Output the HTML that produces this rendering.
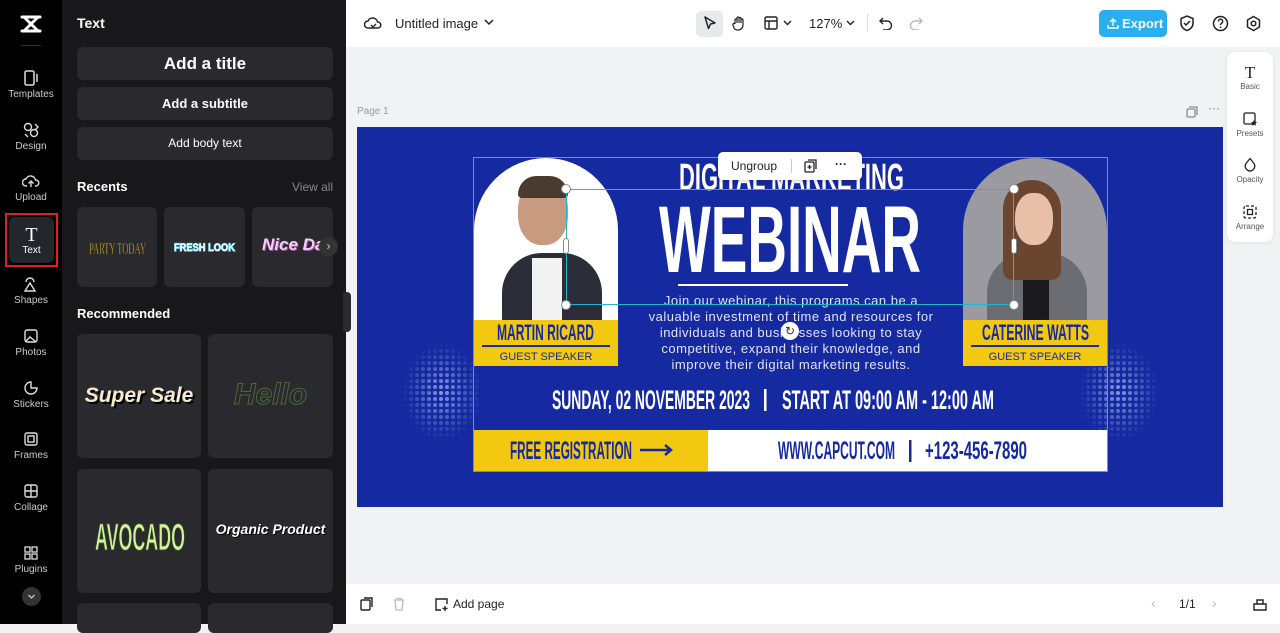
<!DOCTYPE html>
<html><head><meta charset="utf-8"><style>
*{box-sizing:border-box;margin:0;padding:0}
body{width:1280px;height:624px;overflow:hidden;font-family:"Liberation Sans",sans-serif;background:#f1f2f4;position:relative}
.abs{position:absolute}
.side{left:0;top:0;width:62px;height:624px;background:#000}
.nav{position:absolute;left:0;width:62px;text-align:center;color:#ccc;font-size:10px}
.nav svg{display:block;margin:0 auto 3px}
.panel{left:62px;top:0;width:284px;height:624px;background:#18181b;color:#fff}
.btn{position:absolute;left:15px;width:256px;height:33px;background:#2a2a2e;border-radius:6px;text-align:center;color:#fff;font-weight:bold}
.card{position:absolute;background:#2a2a2e;border-radius:6px;overflow:hidden}
</style></head><body>
<!-- sidebar -->
<div class="abs side">
  <svg class="abs" style="left:19px;top:13px" width="24" height="22" viewBox="0 0 24 22"><path d="M3 4h18M3 18h18M5 4l14 14M19 4L5 18" stroke="#fff" stroke-width="3" fill="none" stroke-linecap="round"/></svg>
  <div class="abs" style="left:21px;top:45px;width:20px;height:1px;background:#333"></div>
  <div class="nav" style="top:70px"><svg width="16" height="16"><rect x="2" y="1" width="9" height="14" rx="1.5" stroke="#ddd" fill="none" stroke-width="1.5"/><path d="M14 4v8" stroke="#ddd" stroke-width="1.5"/></svg>Templates</div>
  <div class="nav" style="top:122px"><svg width="16" height="16"><circle cx="5" cy="5" r="3.5" stroke="#ddd" fill="none" stroke-width="1.4"/><circle cx="11" cy="11" r="3.5" stroke="#ddd" fill="none" stroke-width="1.4"/><path d="M12 2l3 3-3 3M2 12l3 3" stroke="#ddd" fill="none" stroke-width="1.4"/></svg>Design</div>
  <div class="nav" style="top:173px"><svg width="18" height="16"><path d="M5 13H4a3.5 3.5 0 010-7 5 5 0 019.5 1A3 3 0 0114 13h-1M9 14V8M6.5 10.5L9 8l2.5 2.5" stroke="#ddd" fill="none" stroke-width="1.4"/></svg>Upload</div>
  <div class="abs" style="left:5px;top:213px;width:53px;height:54px;border:2px solid #e02020;background:#000"><div style="position:absolute;left:2px;top:2px;right:2px;bottom:2px;background:#23272c;border-radius:6px;color:#fff;text-align:center;font-size:10px;padding-top:8px"><div style="font-family:'Liberation Serif',serif;font-size:20px;line-height:20px">T</div>Text</div></div>
  <div class="nav" style="top:276px"><svg width="16" height="16"><path d="M3 6a4 4 0 118 0M2 15l5-8 5 8z" stroke="#ddd" fill="none" stroke-width="1.4"/></svg>Shapes</div>
  <div class="nav" style="top:328px"><svg width="16" height="16"><rect x="2" y="2" width="12" height="12" rx="2" stroke="#ddd" fill="none" stroke-width="1.4"/><path d="M3 13l4-4 6 5" stroke="#ddd" fill="none" stroke-width="1.4"/></svg>Photos</div>
  <div class="nav" style="top:380px"><svg width="16" height="16"><path d="M8 2a6 6 0 106 6H8z" stroke="#ddd" fill="none" stroke-width="1.4"/></svg>Stickers</div>
  <div class="nav" style="top:431px"><svg width="16" height="16"><rect x="2" y="2" width="12" height="12" rx="2" stroke="#ddd" fill="none" stroke-width="1.4"/><rect x="5" y="5" width="6" height="6" stroke="#ddd" fill="none" stroke-width="1.4"/></svg>Frames</div>
  <div class="nav" style="top:483px"><svg width="16" height="16"><rect x="2" y="2" width="12" height="12" rx="2" stroke="#ddd" fill="none" stroke-width="1.4"/><path d="M8 2v12M2 8h12" stroke="#ddd" stroke-width="1.4"/></svg>Collage</div>
  <div class="nav" style="top:545px"><svg width="16" height="16"><rect x="2" y="2" width="5" height="5" stroke="#ddd" fill="none" stroke-width="1.3"/><rect x="9" y="2" width="5" height="5" stroke="#ddd" fill="none" stroke-width="1.3"/><rect x="2" y="9" width="5" height="5" stroke="#ddd" fill="none" stroke-width="1.3"/><rect x="9" y="9" width="5" height="5" stroke="#ddd" fill="none" stroke-width="1.3"/></svg>Plugins</div>
  <div class="abs" style="left:22px;top:587px;width:19px;height:19px;border-radius:50%;background:#333"><svg width="19" height="19"><path d="M6.5 8l3 3 3-3" stroke="#ccc" fill="none" stroke-width="1.3"/></svg></div>
</div>
<!-- panel -->
<div class="abs panel">
  <div class="abs" style="left:15px;top:15px;font-size:14px;font-weight:bold">Text</div>
  <div class="btn" style="top:47px;font-size:17px;line-height:33px">Add a title</div>
  <div class="btn" style="top:87px;font-size:13px;line-height:33px">Add a subtitle</div>
  <div class="btn" style="top:127px;font-size:12px;line-height:33px;font-weight:normal">Add body text</div>
  <div class="abs" style="left:15px;top:179px;font-size:13px;font-weight:bold">Recents</div>
  <div class="abs" style="left:230px;top:180px;font-size:12px;color:#888">View all</div>
  <div class="card" style="left:15px;top:207px;width:80px;height:80px"><svg width="80" height="80"><text x="12" y="47" textLength="57" lengthAdjust="spacingAndGlyphs" font-family="Liberation Serif" font-size="17" fill="#c8a93a" stroke="#3a3010" stroke-width=".4">PARTY TODAY</text></svg></div>
  <div class="card" style="left:102px;top:207px;width:81px;height:80px"><svg width="81" height="80"><text x="10" y="44" textLength="61" lengthAdjust="spacingAndGlyphs" font-family="Liberation Sans" font-weight="bold" font-size="11" fill="#fff" stroke="#4fd4ff" stroke-width="1.2" paint-order="stroke">FRESH LOOK</text></svg></div>
  <div class="card" style="left:190px;top:207px;width:81px;height:80px"><div style="margin-top:28px;padding-left:10px;color:#f0d0f0;font-size:17px;font-style:italic;font-weight:bold;text-shadow:1px 1px 0 #a050a0;white-space:nowrap">Nice Day</div></div>
  <div class="abs" style="left:257px;top:237px;width:19px;height:19px;border-radius:50%;background:#333;color:#ccc;font-size:12px;text-align:center;line-height:18px">›</div>
  <div class="abs" style="left:15px;top:306px;font-size:13px;font-weight:bold">Recommended</div>
  <div class="card" style="left:15px;top:334px;width:124px;height:124px"><div style="margin-top:50px;text-align:center;color:#f5ecd0;font-size:21px;font-style:italic;font-weight:bold;text-shadow:2px 2px 0 #000">Super Sale</div></div>
  <div class="card" style="left:146px;top:334px;width:125px;height:124px"><div style="margin-top:44px;text-align:center;color:#2a2a2e;font-size:30px;font-style:italic;font-weight:bold;-webkit-text-stroke:1px #4a6a3a">Hello</div></div>
  <div class="card" style="left:15px;top:469px;width:124px;height:124px"><svg width="124" height="124"><text x="18" y="81" textLength="90" lengthAdjust="spacingAndGlyphs" font-family="Liberation Sans" font-weight="bold" font-size="38" fill="#d8f0a0" stroke="#2a5a1a" stroke-width="1">AVOCADO</text></svg></div>
  <div class="card" style="left:146px;top:469px;width:125px;height:124px"><div style="margin-top:52px;text-align:center;color:#fff;font-size:14px;font-style:italic;font-weight:bold;text-shadow:1px 1px 0 #000">Organic Product</div></div>
  <div class="card" style="left:15px;top:603px;width:124px;height:30px"></div>
  <div class="card" style="left:146px;top:603px;width:125px;height:30px"></div>
</div>
<div class="abs" style="left:343px;top:292px;width:8px;height:40px;background:#2a2a2e;border-radius:0 4px 4px 0"></div>
<!-- top bar -->
<div class="abs" style="left:346px;top:0;width:934px;height:47px;background:#fff">
  <svg class="abs" style="left:18px;top:15px" width="18" height="16"><path d="M5 13H4a3.5 3.5 0 010-7 5 5 0 019.5 1A3 3 0 0114 13z" stroke="#222" fill="none" stroke-width="1.5"/><path d="M7 10l2 2 3-3" stroke="#222" fill="none" stroke-width="1.3"/></svg>
  <div class="abs" style="left:49px;top:16px;font-size:13px;color:#222">Untitled image</div>
  <svg class="abs" style="left:138px;top:18px" width="10" height="8"><path d="M1 2l4 4 4-4" stroke="#222" fill="none" stroke-width="1.5"/></svg>
  <div class="abs" style="left:350px;top:11px;width:27px;height:26px;background:#e8e9ec;border-radius:5px"><svg width="27" height="26"><path d="M9 6l10 6-4.5 1-2 4.5z" stroke="#222" fill="none" stroke-width="1.5" stroke-linejoin="round"/></svg></div>
  <svg class="abs" style="left:385px;top:15px" width="16" height="16"><path d="M4 9V5a1 1 0 012 0v3V3a1 1 0 012 0v5V3.5a1 1 0 012 0V8V5a1 1 0 012 0v5a5 5 0 01-5 5h-1a4 4 0 01-3-2L2 10a1 1 0 012-1z" stroke="#222" fill="none" stroke-width="1.2"/></svg>
  <svg class="abs" style="left:418px;top:16px" width="14" height="14"><rect x="1" y="1" width="12" height="12" rx="1.5" stroke="#222" fill="none" stroke-width="1.4"/><path d="M1 5h12M5 5v8" stroke="#222" stroke-width="1.4"/></svg>
  <svg class="abs" style="left:437px;top:20px" width="9" height="6"><path d="M1 1l3.5 3.5L8 1" stroke="#222" fill="none" stroke-width="1.4"/></svg>
  <div class="abs" style="left:463px;top:16px;font-size:13px;color:#222">127%</div>
  <svg class="abs" style="left:500px;top:20px" width="9" height="6"><path d="M1 1l3.5 3.5L8 1" stroke="#222" fill="none" stroke-width="1.4"/></svg>
  <div class="abs" style="left:521px;top:14px;width:1px;height:18px;background:#ddd"></div>
  <svg class="abs" style="left:533px;top:16px" width="14" height="14"><path d="M4 2L1 5l3 3M1 5h7a4.5 4.5 0 010 9H4" stroke="#222" fill="none" stroke-width="1.4"/></svg>
  <svg class="abs" style="left:563px;top:16px" width="14" height="14"><path d="M10 2l3 3-3 3M13 5H6a4.5 4.5 0 000 9h4" stroke="#bbb" fill="none" stroke-width="1.4"/></svg>
  <div class="abs" style="left:753px;top:10px;width:68px;height:27px;background:#29aef0;border-radius:5px;color:#fff;font-size:13px;font-weight:bold;line-height:27px;padding-left:23px">Export<svg style="position:absolute;left:8px;top:7px" width="12" height="12"><path d="M6 9V2M3 5l3-3 3 3M1 8v3h10V8" stroke="#fff" fill="none" stroke-width="1.4"/></svg></div>
  <svg class="abs" style="left:833px;top:15px" width="16" height="17"><path d="M8 1l6 2.5v5c0 3.5-3 6-6 7-3-1-6-3.5-6-7v-5z" stroke="#222" fill="none" stroke-width="1.5"/><path d="M5 8l2 2 4-4" stroke="#222" fill="none" stroke-width="1.5"/></svg>
  <svg class="abs" style="left:866px;top:15px" width="17" height="17"><circle cx="8.5" cy="8.5" r="7" stroke="#222" fill="none" stroke-width="1.5"/><path d="M6.3 6.5a2.2 2.2 0 114 1.2c-1 .8-1.8 1-1.8 2.3" stroke="#222" fill="none" stroke-width="1.4"/><circle cx="8.5" cy="12.3" r=".9" fill="#222"/></svg>
  <svg class="abs" style="left:899px;top:15px" width="17" height="17"><path d="M8.5 1.5l6 3.5v7l-6 3.5-6-3.5V5z" stroke="#222" fill="none" stroke-width="1.5"/><circle cx="8.5" cy="8.5" r="2.3" stroke="#222" fill="none" stroke-width="1.5"/></svg>
</div>
<!-- right panel -->
<div class="abs" style="left:1227px;top:52px;width:46px;height:190px;background:#fff;border-radius:8px;box-shadow:0 1px 4px rgba(0,0,0,.08);font-size:8px;color:#555;text-align:center">
  <div style="position:absolute;top:12px;width:46px"><div style="font-family:'Liberation Serif',serif;font-size:17px;color:#222;line-height:18px">T</div>Basic</div>
  <div style="position:absolute;top:59px;width:46px"><svg width="16" height="16"><rect x="2" y="2" width="11" height="11" rx="1.5" stroke="#222" fill="none" stroke-width="1.3"/><path d="M12 9l1 2 2 .3-1.5 1.4.4 2-1.9-1-1.9 1 .4-2L9 11.3l2-.3z" fill="#222"/></svg><br>Presets</div>
  <div style="position:absolute;top:105px;width:46px"><svg width="16" height="16"><path d="M8 1.5l4 5a4.8 4.8 0 11-8 0z" stroke="#222" fill="none" stroke-width="1.3"/></svg><br>Opacity</div>
  <div style="position:absolute;top:152px;width:46px"><svg width="16" height="16"><rect x="2" y="2" width="12" height="12" rx="2" stroke="#222" fill="none" stroke-width="1.3" stroke-dasharray="3 2"/><rect x="5.5" y="5.5" width="5" height="5" stroke="#222" fill="none" stroke-width="1.3"/></svg><br>Arrange</div>
</div>
<div class="abs" style="left:357px;top:106px;font-size:10px;color:#999">Page 1</div>
<svg class="abs" style="left:1186px;top:106px" width="12" height="12"><rect x="1" y="3" width="8" height="8" rx="1" stroke="#777" fill="none" stroke-width="1.1"/><path d="M3 1h8v8" stroke="#777" fill="none" stroke-width="1.1"/></svg>
<div class="abs" style="left:1208px;top:101px;font-size:12px;color:#777">···</div>
<!-- canvas -->
<div class="abs" style="left:357px;top:127px;width:866px;height:380px;background:#1529a1;overflow:hidden">
  <svg class="abs" style="left:45px;top:215px" width="80" height="100"><defs><pattern id="d" width="6" height="6" patternUnits="userSpaceOnUse"><circle cx="3" cy="3" r="2" fill="#8a9ae0"/></pattern><radialGradient id="g"><stop offset="0" stop-color="#fff"/><stop offset="1" stop-color="#fff" stop-opacity="0"/></radialGradient><mask id="m"><ellipse cx="40" cy="50" rx="40" ry="50" fill="url(#g)"/></mask></defs><rect width="80" height="100" fill="url(#d)" mask="url(#m)"/></svg>
  <svg class="abs" style="left:722px;top:215px" width="80" height="100"><rect width="80" height="100" fill="url(#d)" mask="url(#m)"/></svg>
  <!-- left photo -->
  <div class="abs" style="left:117px;top:31px;width:144px;height:162px;background:#fff;border-radius:72px 72px 0 0;overflow:hidden">
    <div class="abs" style="left:28px;top:95px;width:100px;height:80px;background:#2b2e38;border-radius:40px 40px 0 0"></div>
    <div class="abs" style="left:58px;top:100px;width:30px;height:70px;background:#f2f2f2"></div>
    <div class="abs" style="left:44px;top:22px;width:50px;height:65px;background:#c89a80;border-radius:45%"></div>
    <div class="abs" style="left:44px;top:18px;width:50px;height:22px;background:#4a3a30;border-radius:25px 25px 5px 5px"></div>
  </div>
  <div class="abs" style="left:117px;top:193px;width:144px;height:46px;background:#f2c811;text-align:center;color:#1529a1">
    <div style="margin:25px 8px 0;height:1.5px;background:#1529a1"></div>
    <div style="font-size:11px;margin-top:4px">GUEST SPEAKER</div>
  </div>
  <!-- right photo -->
  <div class="abs" style="left:606px;top:31px;width:144px;height:162px;background:#9a9aa0;border-radius:72px 72px 0 0;overflow:hidden">
    <div class="abs" style="left:24px;top:95px;width:100px;height:80px;background:#6c6d72;border-radius:40px 40px 0 0"></div>
    <div class="abs" style="left:60px;top:100px;width:26px;height:70px;background:#1a1a1e"></div>
    <div class="abs" style="left:40px;top:22px;width:58px;height:100px;background:#6a4530;border-radius:30px 30px 10px 10px"></div>
    <div class="abs" style="left:52px;top:35px;width:38px;height:52px;background:#e8c0a8;border-radius:45%"></div>
  </div>
  <div class="abs" style="left:606px;top:193px;width:144px;height:46px;background:#f2c811;text-align:center;color:#1529a1">
    <div style="margin:25px 8px 0;height:1.5px;background:#1529a1"></div>
    <div style="font-size:11px;margin-top:4px">GUEST SPEAKER</div>
  </div>
  <div class="abs" style="left:117px;top:303px;width:234px;height:41px;background:#f2c811"></div>
  <div class="abs" style="left:351px;top:303px;width:399px;height:41px;background:#fff"></div>
  <div class="abs" style="left:321px;top:157px;width:170px;height:2px;background:#fff"></div>
  <div class="abs" style="left:234px;top:166px;width:400px;text-align:center;color:#dfe4f7;font-size:13px;line-height:16px;letter-spacing:.5px;white-space:nowrap">Join our webinar, this programs can be a<br>valuable investment of time and resources for<br>individuals and businesses looking to stay<br>competitive, expand their knowledge, and<br>improve their digital marketing results.</div>
  <svg class="abs" style="left:0;top:0" width="866" height="380" font-family="Liberation Sans" font-weight="bold">
    <text x="322" y="63" textLength="225" lengthAdjust="spacingAndGlyphs" font-size="38" fill="#fff">DIGITAL MARKETING</text>
    <text x="302" y="145" textLength="262" lengthAdjust="spacingAndGlyphs" font-size="95" fill="#fff">WEBINAR</text>
    <text x="195" y="282" textLength="198" lengthAdjust="spacingAndGlyphs" font-size="27" fill="#fff">SUNDAY, 02 NOVEMBER 2023</text>
    <rect x="407" y="262" width="2.5" height="22" fill="#fff"/>
    <text x="425" y="282" textLength="212" lengthAdjust="spacingAndGlyphs" font-size="27" fill="#fff">START AT 09:00 AM - 12:00 AM</text>
    <text x="140" y="213" textLength="97" lengthAdjust="spacingAndGlyphs" font-size="22" fill="#1529a1">MARTIN RICARD</text>
    <text x="625" y="213" textLength="107" lengthAdjust="spacingAndGlyphs" font-size="22" fill="#1529a1">CATERINE WATTS</text>
    <text x="153" y="332" textLength="122" lengthAdjust="spacingAndGlyphs" font-size="25" fill="#1529a1">FREE REGISTRATION</text>
    <path d="M283 323h31M308 318l6 5-6 5" stroke="#1529a1" stroke-width="2.5" fill="none"/>
    <text x="421" y="332" textLength="117" lengthAdjust="spacingAndGlyphs" font-size="25" fill="#1529a1">WWW.CAPCUT.COM</text>
    <rect x="552" y="313" width="2.5" height="22" fill="#1529a1"/>
    <text x="568" y="332" textLength="102" lengthAdjust="spacingAndGlyphs" font-size="25" fill="#1529a1">+123-456-7890</text>
  </svg>
  <!-- selection -->
  <div class="abs" style="left:116px;top:30px;width:635px;height:315px;border:1.5px solid #21b5d0"></div>
  <div class="abs" style="left:209px;top:62px;width:448px;height:116px;border:1.5px solid #21b5d0"></div>
  <div class="abs" style="left:204px;top:57px;width:10px;height:10px;border-radius:50%;background:#fff;border:1px solid #888"></div>
  <div class="abs" style="left:652px;top:57px;width:10px;height:10px;border-radius:50%;background:#fff;border:1px solid #888"></div>
  <div class="abs" style="left:204px;top:173px;width:10px;height:10px;border-radius:50%;background:#fff;border:1px solid #888"></div>
  <div class="abs" style="left:652px;top:173px;width:10px;height:10px;border-radius:50%;background:#fff;border:1px solid #888"></div>
  <div class="abs" style="left:206px;top:111px;width:6px;height:16px;border-radius:3px;background:#fff;border:1px solid #888"></div>
  <div class="abs" style="left:654px;top:111px;width:6px;height:16px;border-radius:3px;background:#fff;border:1px solid #888"></div>
  <div class="abs" style="left:424px;top:195px;width:18px;height:18px;border-radius:50%;background:#fff;color:#333;font-size:12px;text-align:center;line-height:18px">↻</div>
  <div class="abs" style="left:361px;top:25px;width:144px;height:28px;background:#fff;border-radius:5px;box-shadow:0 1px 4px rgba(0,0,0,.2);font-size:12px;color:#222;line-height:28px;padding-left:13px">Ungroup<span class="abs" style="left:73px;top:7px;width:1px;height:14px;background:#ccc"></span><svg class="abs" style="left:86px;top:7px" width="14" height="14"><rect x="1" y="3" width="9" height="10" rx="1" stroke="#222" fill="none" stroke-width="1.3"/><path d="M4 1h8v9M5.5 6v4M3.5 8h4" stroke="#222" fill="none" stroke-width="1.3"/></svg><span class="abs" style="left:117px;top:-2px;font-weight:bold">···</span></div>
</div>
<!-- bottom bar -->
<div class="abs" style="left:346px;top:584px;width:934px;height:40px;background:#fff">
  <svg class="abs" style="left:14px;top:13px" width="14" height="14"><rect x="1" y="3" width="9" height="10" rx="1" stroke="#222" fill="none" stroke-width="1.4"/><path d="M4 1h8v9" stroke="#222" fill="none" stroke-width="1.4"/></svg>
  <svg class="abs" style="left:46px;top:13px" width="14" height="14"><path d="M2 3h10M5 3V1.5h4V3M3 3l1 10h6l1-10" stroke="#bbb" fill="none" stroke-width="1.3"/></svg>
  <svg class="abs" style="left:88px;top:13px" width="15" height="15"><path d="M13 7V2H2v11h5M11 9v5M8.5 11.5h5" stroke="#222" fill="none" stroke-width="1.4"/></svg>
  <div class="abs" style="left:107px;top:13px;font-size:12px;color:#222">Add page</div>
  <div class="abs" style="left:805px;top:11px;font-size:14px;color:#bbb">‹</div>
  <div class="abs" style="left:833px;top:13px;font-size:12px;color:#222">1/1</div>
  <div class="abs" style="left:866px;top:11px;font-size:14px;color:#bbb">›</div>
  <svg class="abs" style="left:907px;top:13px" width="14" height="14"><path d="M1 7h12v6H1zM4 7V3h6v4" stroke="#222" fill="none" stroke-width="1.4"/></svg>
</div>
</body></html>
